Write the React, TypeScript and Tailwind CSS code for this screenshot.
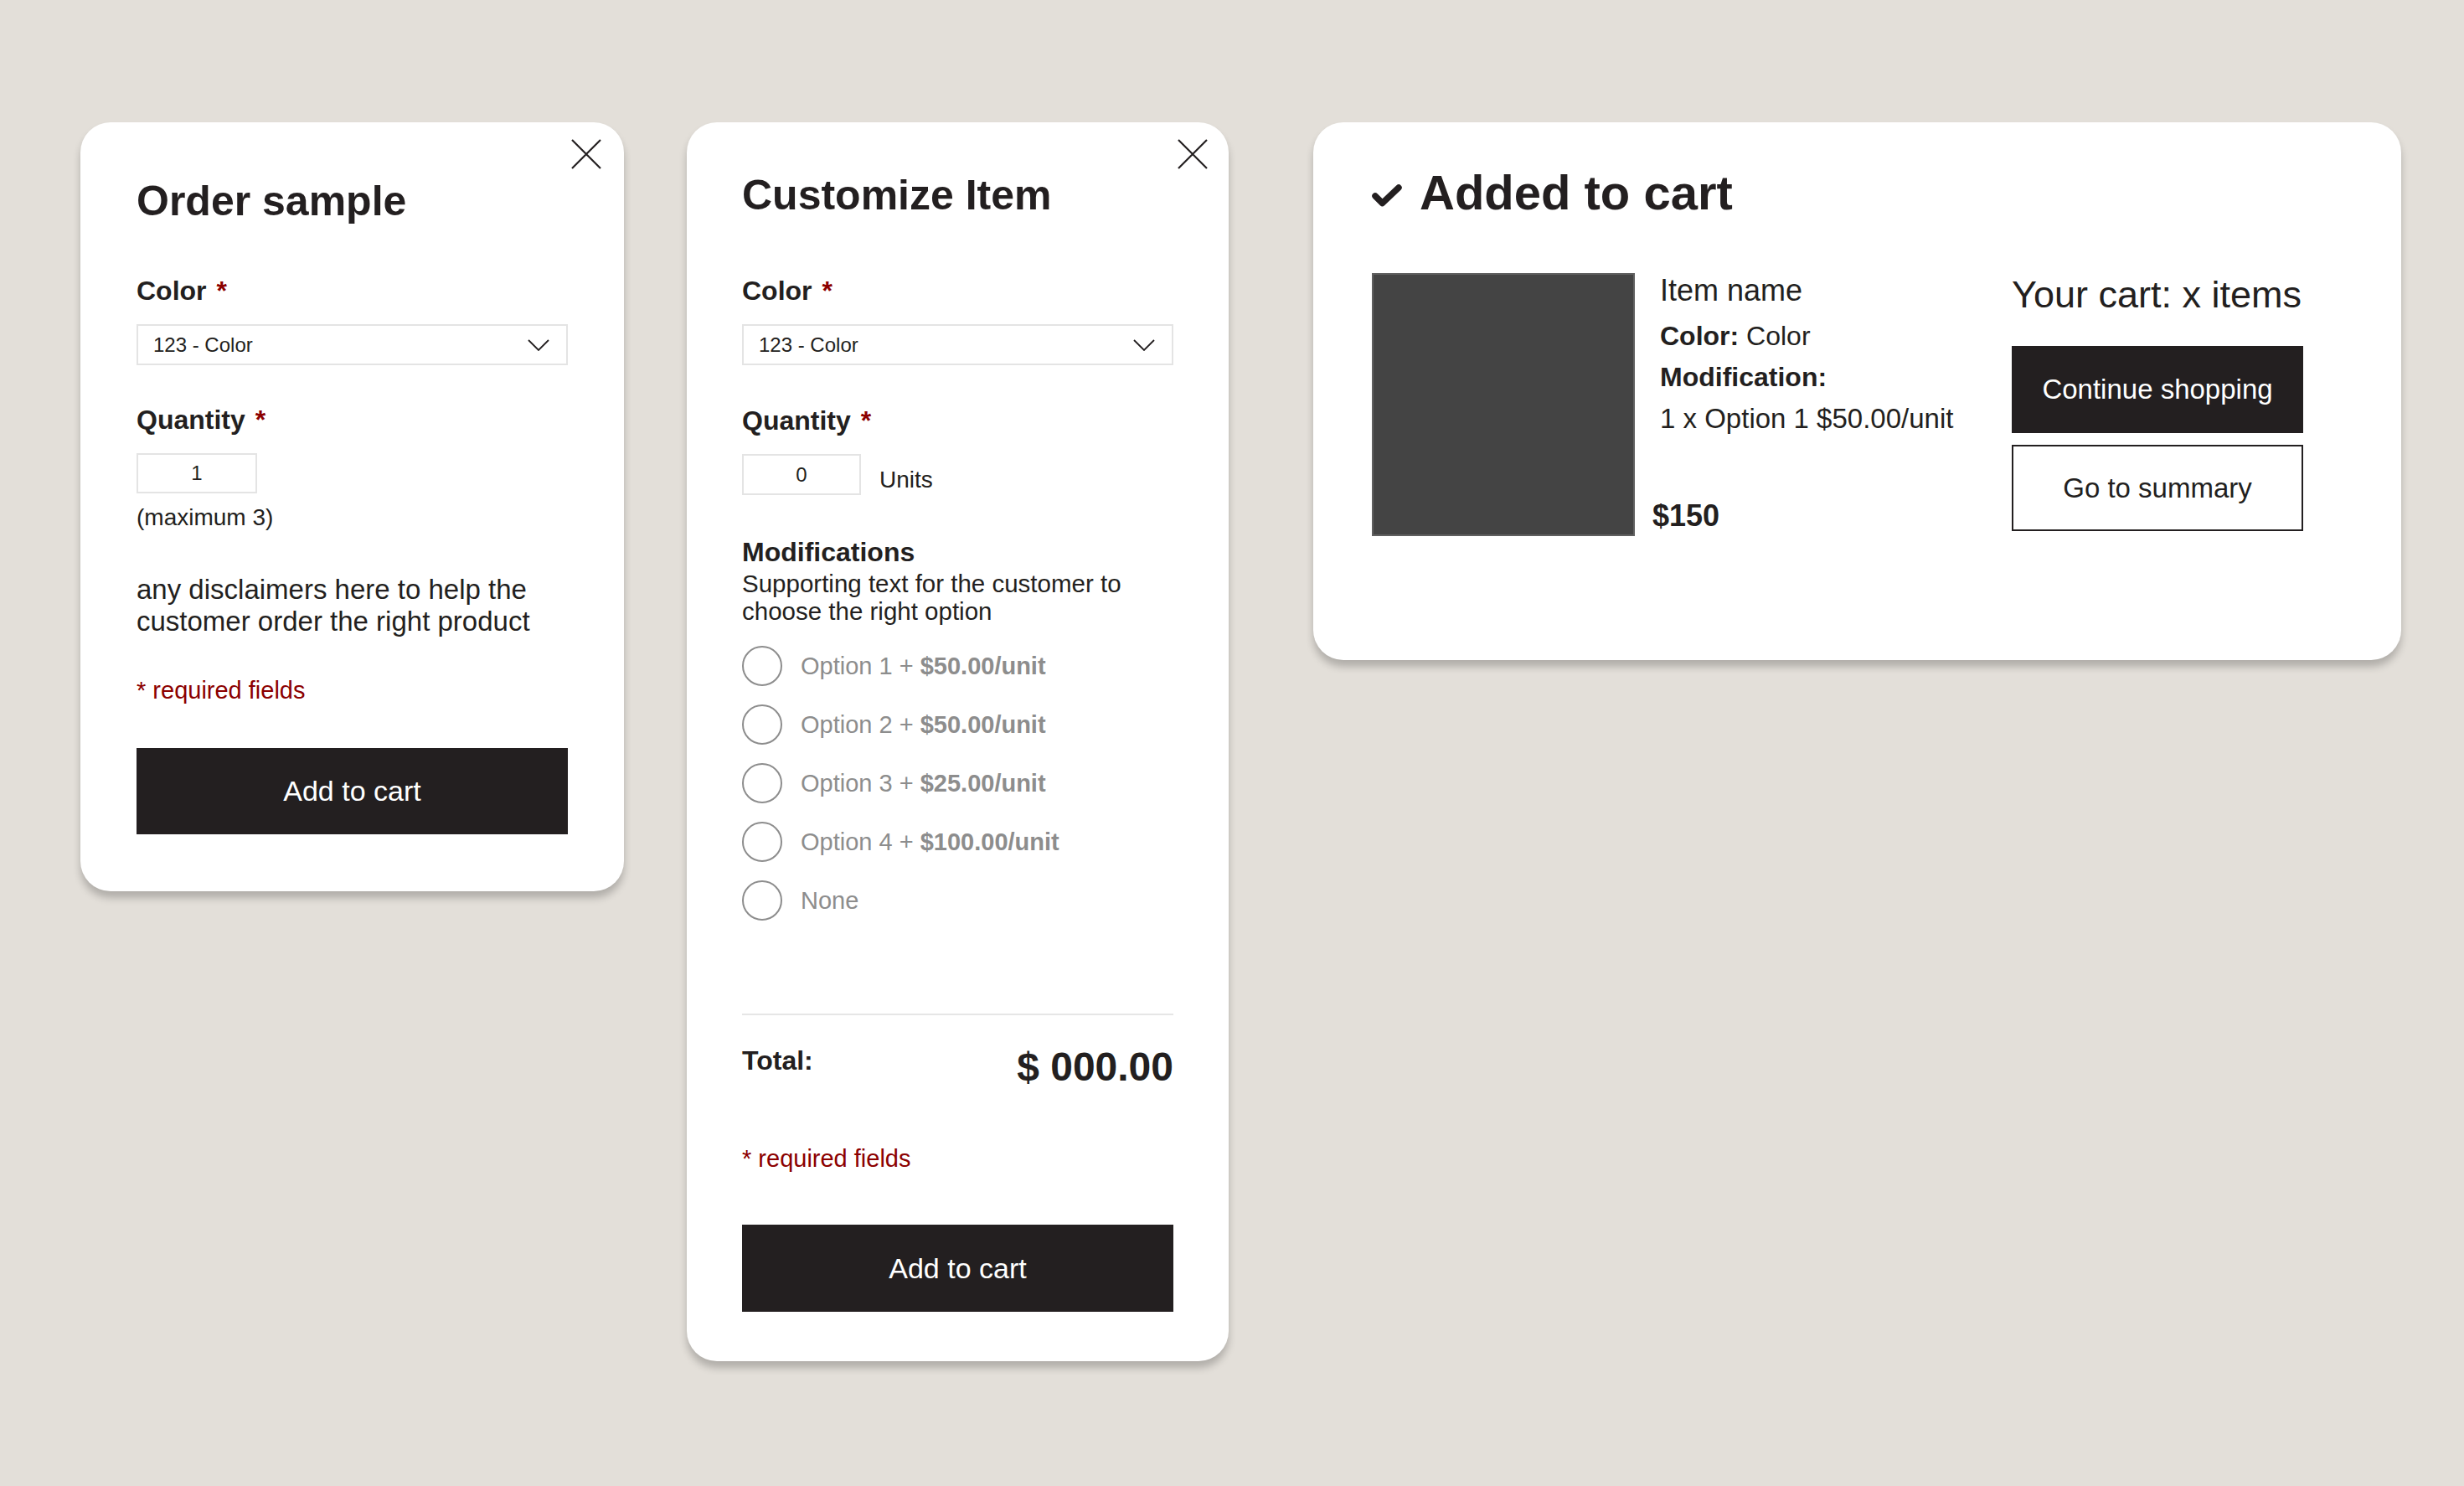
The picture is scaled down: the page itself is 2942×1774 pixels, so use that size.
import React from "react";

const FONT = { fontFamily: '"Liberation Sans", Arial, sans-serif' };

function CloseIcon() {
  return (
    <svg width="36" height="36" viewBox="0 0 36 36" fill="none">
      <path d="M1 1 L35 35 M35 1 L1 35" stroke="#231f20" strokeWidth="2.2" />
    </svg>
  );
}

function Chevron() {
  return (
    <svg width="26" height="14" viewBox="0 0 26 14" fill="none">
      <path d="M1 1 L13 13 L25 1" stroke="#231f20" strokeWidth="1.8" />
    </svg>
  );
}

function Check() {
  return (
    <svg width="36" height="28" viewBox="0 0 36 28" fill="none">
      <path d="M4 14 L12.5 22.5 L32 4" stroke="#231f20" strokeWidth="7.5" strokeLinecap="round" strokeLinejoin="round" />
    </svg>
  );
}

function Req() {
  return <span className="text-[#8c0000] ml-[12px]">*</span>;
}

function Select() {
  return (
    <div className="h-[49px] border-2 border-[#e4e4e4] flex items-center justify-between pl-[18px] pr-[20px]">
      <span className="text-[24px] leading-[30px] text-[#231f20]">123 - Color</span>
      <Chevron />
    </div>
  );
}

function Radio({ label, price }: { label: string; price?: string }) {
  return (
    <div className="flex items-center h-[48px]">
      <div className="w-[48px] h-[48px] rounded-full border-2 border-[#8d8d8d] shrink-0" />
      <div className="ml-[22px] text-[29px] leading-[36px] text-[#8d8d8d]">
        {label}
        {price && <span className="font-bold"> {price}</span>}
      </div>
    </div>
  );
}

export default function App() {
  return (
    <div
      className="h-[1774px] overflow-hidden w-full bg-[#e3dfd9] flex items-start pl-[96px] pt-[146px] text-[#231f20]"
      style={FONT}
    >
      {/* Card 1 */}
      <div className="relative w-[649px] bg-white rounded-[36px] shadow-[0_8px_10px_rgba(0,0,0,0.22)] px-[67px] pt-[64px] pb-[68px]">
        <button className="absolute right-[27px] top-[20px]">
          <CloseIcon />
        </button>
        <h1 className="text-[50px] leading-[60px] font-bold">Order sample</h1>
        <div className="mt-[57px] text-[32px] leading-[40px] font-bold">
          Color<Req />
        </div>
        <div className="mt-[20px]">
          <Select />
        </div>
        <div className="mt-[45px] text-[32px] leading-[40px] font-bold">
          Quantity<Req />
        </div>
        <div className="mt-[20px] w-[144px] h-[48px] border-2 border-[#e4e4e4] flex items-center justify-center text-[24px]">
          1
        </div>
        <div className="mt-[11px] text-[28px] leading-[36px]">(maximum 3)</div>
        <p className="mt-[49px] text-[33px] leading-[38px]">
          any disclaimers here to help the customer order the right product
        </p>
        <div className="mt-[45px] text-[29px] leading-[36px] text-[#8c0000]">* required fields</div>
        <button className="mt-[51px] w-full h-[103px] bg-[#231f20] text-white text-[34px]">Add to cart</button>
      </div>

      {/* Card 2 */}
      <div className="relative ml-[75px] w-[647px] bg-white rounded-[36px] shadow-[0_8px_10px_rgba(0,0,0,0.22)] px-[66px] pt-[57px] pb-[59px]">
        <button className="absolute right-[25px] top-[20px]">
          <CloseIcon />
        </button>
        <h1 className="text-[50px] leading-[60px] font-bold">Customize Item</h1>
        <div className="mt-[64px] text-[32px] leading-[40px] font-bold">
          Color<Req />
        </div>
        <div className="mt-[20px]">
          <Select />
        </div>
        <div className="mt-[46px] text-[32px] leading-[40px] font-bold">
          Quantity<Req />
        </div>
        <div className="mt-[20px] flex items-end">
          <div className="w-[142px] h-[49px] border-2 border-[#e4e4e4] flex items-center justify-center text-[24px]">
            0
          </div>
          <span className="ml-[22px] text-[28px] leading-[36px]">Units</span>
        </div>
        <div className="mt-[49px] text-[32px] leading-[38px] font-bold">Modifications</div>
        <p className="mt-[2px] text-[29.5px] leading-[33px]">
          Supporting text for the customer to choose the right option
        </p>
        <div className="mt-[25px] flex flex-col gap-[22px]">
          <Radio label="Option 1 +" price="$50.00/unit" />
          <Radio label="Option 2 +" price="$50.00/unit" />
          <Radio label="Option 3 +" price="$25.00/unit" />
          <Radio label="Option 4 +" price="$100.00/unit" />
          <Radio label="None" />
        </div>
        <div className="mt-[111px] h-[2px] bg-[#e6e6e6]" />
        <div className="mt-[34px] flex justify-between items-start">
          <span className="text-[32px] leading-[40px] font-bold">Total:</span>
          <span className="text-[48px] leading-[56px] font-bold">$ 000.00</span>
        </div>
        <div className="mt-[63px] text-[29px] leading-[36px] text-[#8c0000]">* required fields</div>
        <button className="mt-[61px] w-full h-[104px] bg-[#231f20] text-white text-[34px]">Add to cart</button>
      </div>

      {/* Card 3 */}
      <div className="ml-[101px] w-[1299px] h-[642px] bg-white rounded-[36px] shadow-[0_8px_10px_rgba(0,0,0,0.22)] pl-[70px] pt-[52px]">
        <div className="flex items-center">
          <div className="mt-[8px]">
            <Check />
          </div>
          <h1 className="ml-[21px] text-[58px] leading-[64px] font-bold">Added to cart</h1>
        </div>
        <div className="mt-[64px] flex items-start">
          <div className="w-[314px] h-[314px] bg-[#444444] border-2 border-[#606060] shrink-0" />
          <div className="ml-[30px] w-[420px] h-[314px] flex flex-col justify-between">
            <div>
              <div className="text-[36px] leading-[44px] -mt-[1px]">Item name</div>
              <div className="mt-[8px] text-[32px] leading-[49px]">
                <span className="font-bold">Color:</span> Color
              </div>
              <div className="text-[32px] leading-[49px] font-bold">Modification:</div>
              <div className="text-[33px] leading-[49px]">1 x Option 1 $50.00/unit</div>
            </div>
            <div className="-ml-[9px] mb-[2px] text-[36px] leading-[44px] font-bold">$150</div>
          </div>
          <div className="w-[348px] flex flex-col">
            <div className="text-[45px] leading-[52px]">Your cart: x items</div>
            <button className="mt-[35px] h-[104px] bg-[#231f20] text-white text-[33px]">Continue shopping</button>
            <button className="mt-[14px] h-[103px] border-2 border-[#231f20] bg-white text-[33px]">Go to summary</button>
          </div>
        </div>
      </div>
    </div>
  );
}
